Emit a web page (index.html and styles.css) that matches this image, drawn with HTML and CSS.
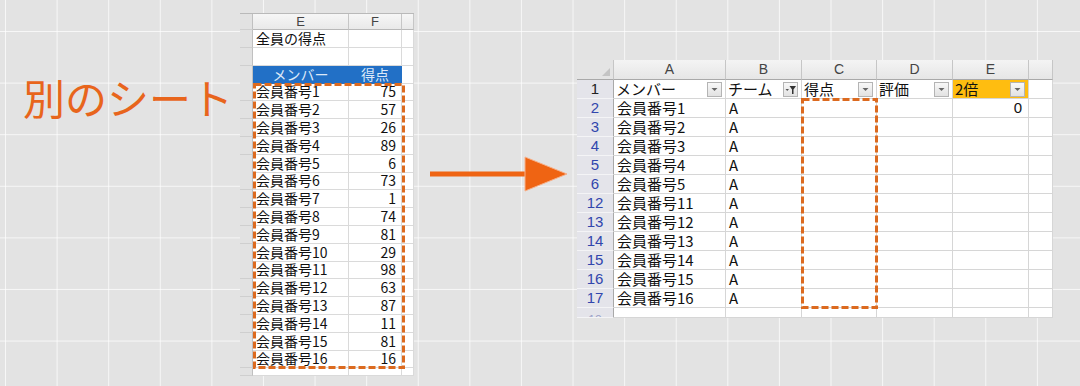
FILE: index.html
```html
<!DOCTYPE html>
<html lang="ja">
<head>
<meta charset="utf-8">
<link rel="stylesheet" href="styles.css">
</head>
<body>
<div class="stage">
  <div class="label">別のシート</div>

  <div class="lsheet">
    <div class="lrow lcolhdr"><div class="lrh"></div><div class="lch">E</div><div class="lch">F</div><div class="lch"></div></div>
    <div class="lrow"><div class="lrh"></div><div class="lc">全員の得点</div><div class="lc"></div><div class="lc"></div></div>
    <div class="lrow"><div class="lrh"></div><div class="lc"></div><div class="lc"></div><div class="lc"></div></div>
    <div class="lrow"><div class="lrh"></div><div class="lc thead">メンバー</div><div class="lc thead">得点</div><div class="lc"></div></div>
    <div class="lrow"><div class="lrh"></div><div class="lc">会員番号1</div><div class="lc num">75</div><div class="lc"></div></div>
    <div class="lrow"><div class="lrh"></div><div class="lc">会員番号2</div><div class="lc num">57</div><div class="lc"></div></div>
    <div class="lrow"><div class="lrh"></div><div class="lc">会員番号3</div><div class="lc num">26</div><div class="lc"></div></div>
    <div class="lrow"><div class="lrh"></div><div class="lc">会員番号4</div><div class="lc num">89</div><div class="lc"></div></div>
    <div class="lrow"><div class="lrh"></div><div class="lc">会員番号5</div><div class="lc num">6</div><div class="lc"></div></div>
    <div class="lrow"><div class="lrh"></div><div class="lc">会員番号6</div><div class="lc num">73</div><div class="lc"></div></div>
    <div class="lrow"><div class="lrh"></div><div class="lc">会員番号7</div><div class="lc num">1</div><div class="lc"></div></div>
    <div class="lrow"><div class="lrh"></div><div class="lc">会員番号8</div><div class="lc num">74</div><div class="lc"></div></div>
    <div class="lrow"><div class="lrh"></div><div class="lc">会員番号9</div><div class="lc num">81</div><div class="lc"></div></div>
    <div class="lrow"><div class="lrh"></div><div class="lc">会員番号10</div><div class="lc num">29</div><div class="lc"></div></div>
    <div class="lrow"><div class="lrh"></div><div class="lc">会員番号11</div><div class="lc num">98</div><div class="lc"></div></div>
    <div class="lrow"><div class="lrh"></div><div class="lc">会員番号12</div><div class="lc num">63</div><div class="lc"></div></div>
    <div class="lrow"><div class="lrh"></div><div class="lc">会員番号13</div><div class="lc num">87</div><div class="lc"></div></div>
    <div class="lrow"><div class="lrh"></div><div class="lc">会員番号14</div><div class="lc num">11</div><div class="lc"></div></div>
    <div class="lrow"><div class="lrh"></div><div class="lc">会員番号15</div><div class="lc num">81</div><div class="lc"></div></div>
    <div class="lrow"><div class="lrh"></div><div class="lc">会員番号16</div><div class="lc num">16</div><div class="lc"></div></div>
    <div class="lrow lpart"><div class="lrh"></div><div class="lc"></div><div class="lc"></div><div class="lc"></div></div>
    <svg class="dash dash-left" width="152" height="286" viewBox="0 0 152 286"><rect x="1.5" y="1.5" width="149" height="283" fill="none" stroke="#dc6a1f" stroke-width="3" stroke-dasharray="7 3"/></svg>
  </div>

  <svg class="arrow" width="142" height="40" viewBox="0 0 142 40">
    <rect x="2" y="16.5" width="98" height="5" fill="#ef6413"/>
    <polygon points="97,2 139,19 97,36" fill="#ef6413" stroke="#f7b08a" stroke-width="1"/>
  </svg>

  <div class="rsheet">
    <div class="rrow rcolhdr">
      <div class="corner"><svg width="10" height="10" viewBox="0 0 10 10"><polygon points="9,1 9,9 1,9" fill="#c4c4c4"/></svg></div>
      <div class="rch">A</div><div class="rch">B</div><div class="rch">C</div><div class="rch">D</div><div class="rch">E</div><div class="rch"></div>
    </div>
    <div class="rrow">
      <div class="rrh dark">1</div>
      <div class="rc hd"><span>メンバー</span><span class="btn"><svg width="13" height="13" viewBox="0 0 13 13"><polygon points="3.5,5 9.5,5 6.5,8" fill="#666"/></svg></span></div>
      <div class="rc hd"><span>チーム</span><span class="btn"><svg width="13" height="13" viewBox="0 0 13 13"><polygon points="1.5,6 5,6 3.25,8" fill="#555"/><polygon points="5.5,3 12,3 9.5,6.5 9.5,11 8,11 8,6.5" fill="#333"/></svg></span></div>
      <div class="rc hd"><span>得点</span><span class="btn"><svg width="13" height="13" viewBox="0 0 13 13"><polygon points="3.5,5 9.5,5 6.5,8" fill="#666"/></svg></span></div>
      <div class="rc hd"><span>評価</span><span class="btn"><svg width="13" height="13" viewBox="0 0 13 13"><polygon points="3.5,5 9.5,5 6.5,8" fill="#666"/></svg></span></div>
      <div class="rc hd orange"><span>2倍</span><span class="btn"><svg width="13" height="13" viewBox="0 0 13 13"><polygon points="3.5,5 9.5,5 6.5,8" fill="#666"/></svg></span></div>
      <div class="rc"></div>
    </div>
    <div class="rrow"><div class="rrh">2</div><div class="rc">会員番号1</div><div class="rc">A</div><div class="rc"></div><div class="rc"></div><div class="rc num">0</div><div class="rc"></div></div>
    <div class="rrow"><div class="rrh">3</div><div class="rc">会員番号2</div><div class="rc">A</div><div class="rc"></div><div class="rc"></div><div class="rc"></div><div class="rc"></div></div>
    <div class="rrow"><div class="rrh">4</div><div class="rc">会員番号3</div><div class="rc">A</div><div class="rc"></div><div class="rc"></div><div class="rc"></div><div class="rc"></div></div>
    <div class="rrow"><div class="rrh">5</div><div class="rc">会員番号4</div><div class="rc">A</div><div class="rc"></div><div class="rc"></div><div class="rc"></div><div class="rc"></div></div>
    <div class="rrow"><div class="rrh">6</div><div class="rc">会員番号5</div><div class="rc">A</div><div class="rc"></div><div class="rc"></div><div class="rc"></div><div class="rc"></div></div>
    <div class="rrow"><div class="rrh">12</div><div class="rc">会員番号11</div><div class="rc">A</div><div class="rc"></div><div class="rc"></div><div class="rc"></div><div class="rc"></div></div>
    <div class="rrow"><div class="rrh">13</div><div class="rc">会員番号12</div><div class="rc">A</div><div class="rc"></div><div class="rc"></div><div class="rc"></div><div class="rc"></div></div>
    <div class="rrow"><div class="rrh">14</div><div class="rc">会員番号13</div><div class="rc">A</div><div class="rc"></div><div class="rc"></div><div class="rc"></div><div class="rc"></div></div>
    <div class="rrow"><div class="rrh">15</div><div class="rc">会員番号14</div><div class="rc">A</div><div class="rc"></div><div class="rc"></div><div class="rc"></div><div class="rc"></div></div>
    <div class="rrow"><div class="rrh">16</div><div class="rc">会員番号15</div><div class="rc">A</div><div class="rc"></div><div class="rc"></div><div class="rc"></div><div class="rc"></div></div>
    <div class="rrow"><div class="rrh">17</div><div class="rc">会員番号16</div><div class="rc">A</div><div class="rc"></div><div class="rc"></div><div class="rc"></div><div class="rc"></div></div>
    <div class="rrow rpart"><div class="rrh part">18</div><div class="rc"></div><div class="rc"></div><div class="rc"></div><div class="rc"></div><div class="rc"></div><div class="rc"></div></div>
    <svg class="dash dash-right" width="77" height="211" viewBox="0 0 77 211"><rect x="1.5" y="1.5" width="74" height="208" fill="none" stroke="#dc6a1f" stroke-width="3" stroke-dasharray="7 3"/></svg>
  </div>
</div>
</body>
</html>
```

FILE: styles.css
```css
* { box-sizing: border-box; }
html, body { margin: 0; padding: 0; }
body {
  width: 1080px;
  height: 386px;
  overflow: hidden;
  background-color: #e3e3e3;
  background-image:
    linear-gradient(to right, rgba(255,255,255,0.7) 1px, transparent 1px),
    linear-gradient(to bottom, rgba(255,255,255,0.7) 1px, transparent 1px);
  background-size: 51.6px 51.6px;
  background-position: 5px 31px;
  font-family: "Noto Sans CJK JP", "Noto Sans", sans-serif;
}
.stage {
  display: flex;
  align-items: flex-start;
}
.label {
  width: 240px;
  padding-left: 23px;
  margin-top: 72px;
  font-size: 42px;
  line-height: 50px;
  color: #e8651c;
  white-space: nowrap;
}

/* left sheet */
.lsheet {
  position: relative;
  width: 174px;
  margin-top: 13px;
  background: #fff;
  border-top: 1px solid #b9b9b9;
}
.lrow {
  display: grid;
  grid-template-columns: 13px 96px 53px 12px;
  height: 17.8px;
  font-size: 14px;
  line-height: 17px;
  color: #111;
}
.lcolhdr { height: 16px; }
.lpart { height: 8px; }
.lrh {
  background: #e2e2e2;
  border-right: 1px solid #c0c0c0;
  border-bottom: 1px solid #cfcfcf;
}
.lch {
  background: linear-gradient(#f6f6f6, #e9e9e9);
  border-right: 1px solid #c6c6c6;
  border-bottom: 1px solid #b8b8b8;
  text-align: center;
  font-size: 13px;
  line-height: 15px;
  color: #444;
  font-family: "Liberation Sans", sans-serif;
}
.lc {
  border-right: 1px solid #dadada;
  border-bottom: 1px solid #dadada;
  padding: 0 3px;
  white-space: nowrap;
}
.lc.num { text-align: right; padding-right: 5px; }
.lc.thead {
  background: #2270c6;
  color: #dce8f8;
  text-align: center;
  border-right-color: #2270c6;
  border-bottom-color: #2270c6;
}
.dash {
  position: absolute;
  display: block;
}
.dash-left { left: 13px; top: 69px; }

.arrow {
  display: block;
  margin-left: 14px;
  margin-top: 155px;
}

/* right sheet */
.rsheet {
  position: relative;
  width: 476px;
  margin-left: 7px;
  margin-top: 60px;
  background: #fff;
}
.rrow {
  display: grid;
  grid-template-columns: 37px 112px 76px 75px 76px 76px 24px;
  height: 19px;
  font-size: 15px;
  line-height: 18px;
  color: #111;
}
.rcolhdr { height: 20px; }
.rpart { height: 10px; }
.corner {
  background: #e4e4e4;
  border-right: 1px solid #c6c6c6;
  border-bottom: 1px solid #a9a9a9;
  display: flex;
  align-items: flex-end;
  justify-content: flex-end;
  padding: 0 2px 2px 0;
}
.corner svg { display: block; }
.rch {
  background: linear-gradient(#f4f4f4, #e6e6e6);
  border-right: 1px solid #c6c6c6;
  border-bottom: 1px solid #a9a9a9;
  text-align: center;
  font-family: "Liberation Sans", sans-serif;
  font-size: 14px;
  line-height: 19px;
  color: #444;
}
.rrh {
  background: #e4e4ea;
  border-right: 1px solid #a9a9a9;
  border-bottom: 1px solid #f4f4f6;
  text-align: center;
  font-family: "Liberation Sans", sans-serif;
  font-size: 15px;
  line-height: 18px;
  color: #3146ad;
}
.rrh.dark { color: #222; }
.rrh.part {
  overflow: hidden;
  line-height: 18px;
  color: #9aa0c8;
  font-size: 12px;
  padding-top: 3px;
}
.rc {
  border-right: 1px solid #d6d6d6;
  border-bottom: 1px solid #d6d6d6;
  padding: 0 3px;
  white-space: nowrap;
}
.rc.num { text-align: right; padding-right: 6px; font-family: "Liberation Sans", sans-serif; }
.rc.hd {
  display: flex;
  align-items: center;
  justify-content: space-between;
  padding: 0 3px 0 2px;
}
.rc.orange { background: #ffbd10; }
.btn {
  width: 15px;
  height: 15px;
  border: 1px solid #b4b4b4;
  background: linear-gradient(#f8f8f8, #e2e2e2);
  display: flex;
  align-items: center;
  justify-content: center;
}
.btn svg { display: block; }
.dash-right { left: 224px; top: 38px; }
```
